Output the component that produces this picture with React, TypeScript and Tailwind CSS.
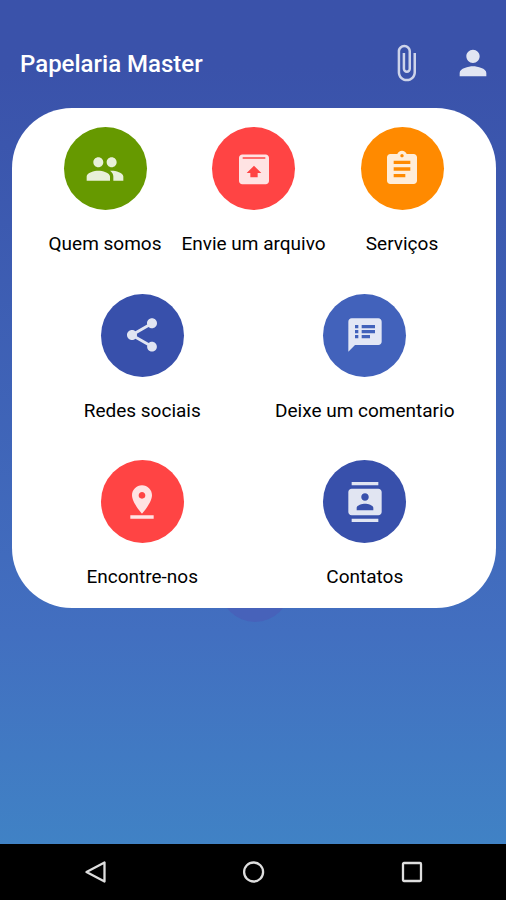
import type { IconType } from "react-icons"
import {
    MdAssignment,
    MdAttachFile,
    MdContacts,
    MdPeople,
    MdPerson,
    MdPinDrop,
    MdShare,
    MdSpeakerNotes,
} from "react-icons/md"

function UploadBoxIcon({ className }: { className?: string }) {
    return (
        <svg viewBox="0 0 24 24" fill="currentColor" className={className}>
            <path
                fillRule="evenodd"
                d="M5 3.300h14c1.100 0 2 .9 2 2V19.200c0 1.100-.9 2-2 2H5c-1.100 0-2-.9-2-2V5.300c0-1.100.9-2 2-2zM5.200 5v.8h13.600V5H5.200zM12 10l-4.400 4.400h2.200v2.600h4.400v-2.600h2.200L12 10z"
            />
        </svg>
    )
}

type Item = {
    label: string
    color: string
    icon: IconType | typeof UploadBoxIcon
}

const topRow: Item[] = [
    { label: "Quem somos", color: "bg-[#669900]", icon: MdPeople },
    { label: "Envie um arquivo", color: "bg-[#ff4444]", icon: UploadBoxIcon },
    { label: "Serviços", color: "bg-[#ff8a00]", icon: MdAssignment },
]

const lowerRows: Item[] = [
    { label: "Redes sociais", color: "bg-[#3850ab]", icon: MdShare },
    { label: "Deixe um comentario", color: "bg-[#4262bb]", icon: MdSpeakerNotes },
    { label: "Encontre-nos", color: "bg-[#ff4444]", icon: MdPinDrop },
    { label: "Contatos", color: "bg-[#3850ab]", icon: MdContacts },
]

function MenuItem({ label, color, icon: Icon }: Item) {
    return (
        <button className="flex h-[166.6px] flex-col items-center pt-[19.5px]">
            <span className={`flex size-[83px] shrink-0 items-center justify-center rounded-full ${color}`}>
                <Icon className="size-10 text-white/85" />
            </span>
            <span className="mt-5 text-[19px] leading-7 whitespace-nowrap text-black">{label}</span>
        </button>
    )
}

export default function App() {
    return (
        <div className="flex h-[900px] w-[506px] flex-col overflow-hidden bg-black font-['Roboto',sans-serif]">
            <main className="flex h-[844px] flex-col bg-linear-to-b from-[#3a52aa] from-8% via-[#426fc0] via-75% to-[#4082c5]">
                {/* App bar */}
                <header className="flex h-[107.5px] shrink-0 items-center pt-[18px] pr-[13px] pl-5">
                    <h1 className="flex-1 pt-0.5 text-[24px] leading-8 font-medium text-white">Papelaria Master</h1>
                    <MdAttachFile className="mr-[27px] size-10 text-white/75" />
                    <MdPerson className="size-10 text-white/85" />
                </header>

                {/* Menu card */}
                <section className="relative z-10 ml-[11.5px] h-[500px] w-[484px] shrink-0 rounded-[60px] bg-white">
                    <div className="grid grid-cols-[148.5px_148.5px_148.5px] justify-center">
                        {topRow.map((item) => (
                            <MenuItem key={item.label} {...item} />
                        ))}
                    </div>
                    <div className="grid grid-cols-[222.5px_222.5px] justify-center">
                        {lowerRows.map((item) => (
                            <MenuItem key={item.label} {...item} />
                        ))}
                    </div>
                </section>

                {/* Floating button showing from under the card */}
                <div className="ml-[220px] -mt-[56px] size-[70px] shrink-0 rounded-full bg-[#4762ba]" />
            </main>

            {/* Android navigation */}
            <nav className="flex flex-1 items-center justify-between pr-[82px] pl-[84px] text-[#dedede]">
                <svg viewBox="0 0 24 24" className="size-6 fill-none stroke-current stroke-[2.3px]">
                    <path d="M20.500 2.500v19L2.500 12z" strokeLinejoin="round" />
                </svg>
                <svg viewBox="0 0 24 24" className="size-6 fill-none stroke-current stroke-[2.3px]">
                    <circle cx="11.600" cy="12" r="9.500" />
                </svg>
                <svg viewBox="0 0 24 24" className="size-6 fill-none stroke-current stroke-[2.3px]">
                    <rect x="3" y="3" width="18" height="18" rx="1" />
                </svg>
            </nav>
        </div>
    )
}
